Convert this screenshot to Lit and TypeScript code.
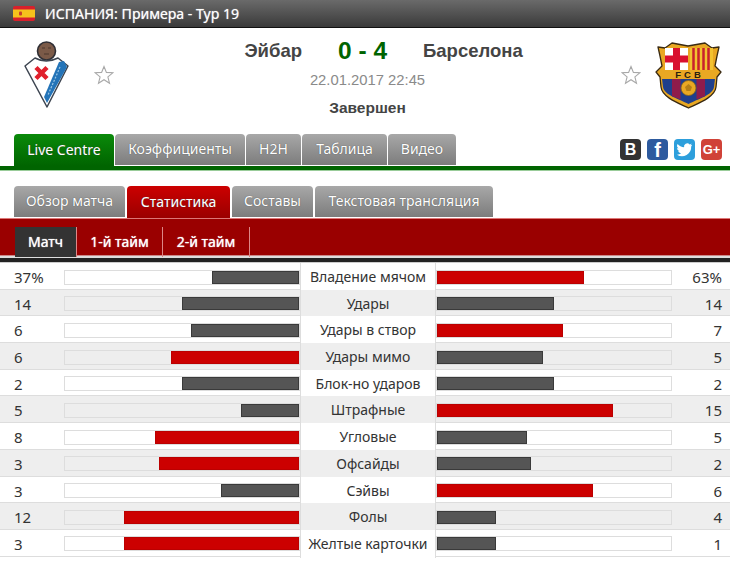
import { LitElement, html, css, svg } from "lit";
import { customElement } from "lit/decorators.js";

const rows: [string, number, number, string?, string?][] = [
  ["Владение мячом", 37, 63, "37%", "63%"],
  ["Удары", 14, 14],
  ["Удары в створ", 6, 7],
  ["Удары мимо", 6, 5],
  ["Блок-но ударов", 2, 2],
  ["Штрафные", 5, 15],
  ["Угловые", 8, 5],
  ["Офсайды", 3, 2],
  ["Сэйвы", 3, 6],
  ["Фолы", 12, 4],
  ["Желтые карточки", 3, 1],
];

const star = html`<svg class="star" width="20" height="20" viewBox="0 0 20 20"><path d="M10 1.5 12.4 7.4 18.8 7.8 13.9 11.9 15.5 18.2 10 14.7 4.5 18.2 6.1 11.9 1.2 7.8 7.6 7.4Z" fill="#fff" stroke="#a8a8a8" stroke-width="1.1"/></svg>`;

const flag = html`<svg class="flag" width="22" height="15" viewBox="0 0 22 15">
  <rect width="22" height="15" rx="2" fill="#d8202c"/>
  <rect y="3.500" width="22" height="8" fill="#f6c21c"/>
  <rect x="6" y="5.500" width="3" height="4" rx="1" fill="#c8402c"/>
</svg>`;

const eibar = html`<svg class="eibar" width="50" height="70" viewBox="0 0 50 70">
  <circle cx="24.5" cy="11" r="9" fill="#7b5a48" stroke="#2f2f35" stroke-width="1.6"/>
  <path d="M20 8h3M26 8h3M22 14h5" stroke="#4c362c" stroke-width="1" fill="none"/>
  <path d="M3 26 13 18Q24 24 36 18L46 26 25 67Z" fill="#fff" stroke="#3c4450" stroke-width="1.5" stroke-linejoin="round"/>
  <path d="M37 22 42 21 45 27 25 63 22 57Z" fill="#2474b8"/>
  <path d="M38 27 26 55" stroke="#9cc7e6" stroke-width="1.2" stroke-dasharray="2 1.5"/>
  <path d="M14 27.500 25 38.500M25 27.500 14 38.500" stroke="#e0202c" stroke-width="4.500"/>
</svg>`;

const barca = html`<svg class="barca" width="67" height="68" viewBox="0 0 67 68">
  <path d="M3 6 10 7 17 2 33 5 50 2 57 7 64 6 62 15 60 25 66 31 62 36 61 46C60 56 44 62 33.500 67 23 62 7 56 6 46L5 36 1 31 7 25 5 15Z" fill="#e9a823" stroke="#3a2a12" stroke-width="1.300" stroke-linejoin="round"/>
  <rect x="10" y="7" width="23" height="22" fill="#fff"/>
  <rect x="18" y="7" width="7" height="22" fill="#d9102f"/>
  <rect x="10" y="14.500" width="23" height="7" fill="#d9102f"/>
  <rect x="35" y="7" width="23" height="22" fill="#f2c230"/>
  <path d="M38.500 7v22M43.500 7v22M48.500 7v22M53.500 7v22" stroke="#c9202c" stroke-width="2.500"/>
  <rect x="6" y="29" width="55" height="8" fill="#e9a823"/>
  <text x="34.500" y="36.500" text-anchor="middle" class="fcb">FCB</text>
  <path d="M7 38H60L59 46C58 54 43 58 33.500 63 24 58 9 54 8 46Z" fill="#1f3f8c"/>
  <path d="M17 38h8.500V58.500L17 55ZM41.500 38H50V55L41.500 58.500Z" fill="#8f1c4b"/>
  <circle cx="33.500" cy="47" r="7.500" fill="#e9a823" stroke="#8a6414" stroke-width="0.8"/>
  <path d="M33.500 43 37 46 35.500 50H31.500L30 46Z" fill="#b57f15"/>
</svg>`;

const vk = svg`<text x="10.500" y="16" text-anchor="middle" class="soc b">В</text>`;
const fb = svg`<text x="10.500" y="18" text-anchor="middle" class="soc f">f</text>`;
const gp = svg`<text x="10.500" y="15" text-anchor="middle" class="soc g">G+</text>`;
const tw = svg`<path d="M18 5.800c-.6.300-1.200.4-1.800.5.600-.4 1.100-1 1.400-1.700-.6.400-1.300.6-2 .8a3.200 3.200 0 0 0-5.500 2.900C7.500 8.200 5.100 6.900 3.600 5a3.200 3.200 0 0 0 1 4.300c-.5 0-1-.2-1.500-.4 0 1.600 1.100 2.900 2.600 3.200-.5.100-1 .1-1.500 0 .4 1.300 1.600 2.200 3 2.200A6.500 6.500 0 0 1 3 15.700 9.200 9.200 0 0 0 17.200 7.500c.3-.5.600-1 .8-1.700Z" fill="#fff"/>`;

@customElement("app-root")
export class AppRoot extends LitElement {
  static styles = css`
    :host { display: block; width: 730px; height: 567px; overflow: hidden; background: #fff; font-family: "Noto Sans", "Liberation Sans", sans-serif; color: #333; }
    .top { height: 27px; border-bottom: 1px solid #111; background: linear-gradient(#6a6a6a, #3a3a3a); display: flex; align-items: center; gap: 10px; padding-left: 13px; color: #fff; font-size: 14.1px; text-shadow: 0 0 1px #ccc; }
    .flag { display: block; }
    .match { height: 105px; display: grid; grid-template-columns: 245px 1fr 245px; }
    .side { display: flex; align-items: flex-start; }
    .eibar { margin: 12px 0 0 22px; }
    .side.l .star { margin: 37px 0 0 22px; }
    .side.r { justify-content: flex-end; }
    .side.r .star { margin: 37px 14px 0 0; }
    .barca { margin: 13px 8px 0 0; }
    .center { display: flex; flex-direction: column; align-items: center; }
    .teams { display: flex; justify-content: center; white-space: nowrap; align-items: center; height: 46px; margin-left: -5px; }
    .name { font: bold 18.5px "Liberation Sans", sans-serif; color: #444; width: 100px; }
    .name.c { text-align: right; margin-left: -43px; }
    .name.a { margin-right: -43px; }
    .score { font: bold 24.5px "Liberation Sans", sans-serif; color: #006400; margin: 0 36px; white-space: nowrap; }
    .date { font: 14.800px "Liberation Sans", sans-serif; color: #8a8a8a; height: 27px; margin-left: 5px; margin-top: -2px; }
    .status { font: bold 15.500px "Liberation Sans", sans-serif; color: #444; margin-left: 5px; }
    .tabs { display: flex; gap: 1px; padding-left: 14px; height: 31px; align-items: stretch; }
    .tabs.sub { gap: 2px; }
    .tab { display: flex; align-items: center; justify-content: center; padding-bottom: 2px; box-sizing: border-box; color: #fff; font-size: 14px; background: linear-gradient(#a8a8a8, #7c7c7c); border-radius: 4px 4px 0 0; text-shadow: 0 0 1px #444; }
    .main .tab.on { background: linear-gradient(#0a8a0a, #006400); margin-bottom: -1px; }
    .sub .tab.on { background: linear-gradient(#cc0000, #9a0000); margin-bottom: -1px; }
    .tabrow { display: flex; justify-content: space-between; margin-top: 1px; }
    .social { display: flex; gap: 6px; padding: 5px 8px 0 0; }
    .ic { width: 21px; height: 21px; border-radius: 4px; display: block; }
    .soc { fill: #fff; font-family: "Liberation Sans", sans-serif; font-weight: bold; }
    .soc.b { font-size: 16px; }
    .soc.f { font-size: 20px; }
    .soc.g { font-size: 13px; }
    .fcb { font: bold 9.500px "Liberation Sans", sans-serif; letter-spacing: 3px; fill: #2a2010; }
    .gline { height: 4px; background: #006400; border-top: 1px solid #fff; border-bottom: 1px solid #9c9; margin-bottom: 15px; }
    .red { margin-top: 1px; background: #9a0000; border-top: 1px solid #d77; border-bottom: 1px solid #c88; padding-left: 15px; display: flex; align-items: flex-end; height: 36px; }
    .st { height: 30px; margin-bottom: -2px; box-sizing: border-box; padding-bottom: 1px; display: flex; align-items: center; justify-content: center; color: #fff; font-size: 14px; border-right: 1px solid #d88; text-shadow: 0 0 1px #fff; }
    .st.on { background: #333; }
    .bline { height: 4px; border-top: 2px solid #ddd; background: #222; border-bottom: 1px solid #ccc; }
    .row { height: 26.7px; box-sizing: border-box; border-bottom: 1px solid #ddd; display: grid; grid-template-columns: 64px 236px 136px 236px 1fr; align-items: center; font-size: 14px; color: #333; }
    .row.alt { background: #eee; }
    .lv { padding-left: 14px; font-size: 15px; }
    .rv { text-align: right; padding-right: 8px; font-size: 15px; }
    .lab { text-align: center; height: 100%; line-height: 28px; border-left: 1px solid #ddd; border-right: 1px solid #ddd; background: #fff; box-sizing: border-box; white-space: nowrap; }
    .alt .lab { background: #eee; }
    .bar { height: 15px; border: 1px solid #ddd; box-sizing: border-box; background: #fff; display: flex; }
    .alt .bar { background: #eee; }
    .bar.l { justify-content: flex-end; }
    .fill { height: 100%; box-sizing: border-box; background: #555; border: 1px solid #3a3a3a; }
    .fill.hot { background: #c00; border-color: #b00; }
  `;

  render() {
    const mainTabs: [string, number, boolean?][] = [["Live Centre", 100, true], ["Коэффициенты", 130], ["H2H", 55], ["Таблица", 85], ["Видео", 68]];
    const subTabs: [string, number, boolean?][] = [["Обзор матча", 111], ["Статистика", 103, true], ["Составы", 81], ["Текстовая трансляция", 178]];
    return html`
      <div class="top">${flag}<span>ИСПАНИЯ: Примера - Тур 19</span></div>
      <div class="match">
        <div class="side l">${eibar}${star}</div>
        <div class="center">
          <div class="teams"><span class="name c">Эйбар</span><span class="score">0 - 4</span><span class="name a">Барселона</span></div>
          <div class="date">22.01.2017 22:45</div>
          <div class="status">Завершен</div>
        </div>
        <div class="side r">${star}${barca}</div>
      </div>
      <div class="tabrow">
        <div class="tabs main">${mainTabs.map(([t, w, on]) => html`<div class="tab ${on ? "on" : ""}" style="width:${w}px">${t}</div>`)}</div>
        <div class="social">
          <svg class="ic" viewBox="0 0 21 21" style="background:#333">${vk}</svg>
          <svg class="ic" viewBox="0 0 21 21" style="background:#2d5a9e">${fb}</svg>
          <svg class="ic" viewBox="0 0 21 21" style="background:#2d9fdc">${tw}</svg>
          <svg class="ic" viewBox="0 0 21 21" style="background:#d04238">${gp}</svg>
        </div>
      </div>
      <div class="gline"></div>
      <div class="tabs sub">${subTabs.map(([t, w, on]) => html`<div class="tab ${on ? "on" : ""}" style="width:${w}px">${t}</div>`)}</div>
      <div class="red">
        <div class="st on" style="width:62px">Матч</div>
        <div class="st" style="width:86px">1-й тайм</div>
        <div class="st" style="width:87px">2-й тайм</div>
      </div>
      <div class="bline"></div>
      ${rows.map(([label, a, b, as, bs], i) => {
        const total = a + b;
        const la = (a / total) * 100;
        const lb = (b / total) * 100;
        return html`<div class="row ${i % 2 ? "alt" : ""}">
          <div class="lv">${as ?? a}</div>
          <div class="bar l"><div class="fill ${a > b ? "hot" : ""}" style="width:${la}%"></div></div>
          <div class="lab">${label}</div>
          <div class="bar"><div class="fill ${b > a ? "hot" : ""}" style="width:${lb}%"></div></div>
          <div class="rv">${bs ?? b}</div>
        </div>`;
      })}
    `;
  }
}
